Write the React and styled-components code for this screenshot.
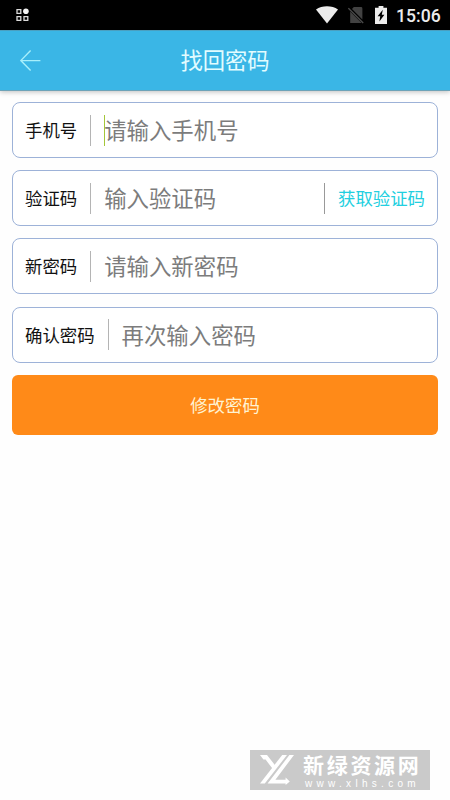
import React from "react"
import styled, { createGlobalStyle } from "styled-components"

const fields = [
  { label: "手机号", placeholder: "请输入手机号", focused: true },
  { label: "验证码", placeholder: "输入验证码", action: "获取验证码" },
  { label: "新密码", placeholder: "请输入新密码" },
  { label: "确认密码", placeholder: "再次输入密码" },
]

const App = () => {
  return (
    <Screen>
      <GlobalStyle />
      <StatusBar>
        <AppsIcon width="14" height="14" viewBox="0 0 14 14">
          <path
            d="M1 1.6h3.8v3.8H1zM1 8.6h3.8v3.8H1zM8 8.6h3.8v3.8H8z"
            fill="none"
            stroke="#dcdcdc"
            strokeWidth="1.3"
          />
          <circle cx="9.9" cy="3.3" r="2.8" fill="#f4f4f4" />
        </AppsIcon>
        <StatusIcons>
          <svg width="22" height="18" viewBox="0 0 22 18">
            <path d="M0 3.6C6-.8 16-.8 22 3.6L11 17.6z" fill="#ececec" />
          </svg>
          <svg width="17" height="18" viewBox="0 0 17 18">
            <path d="M5.8 1H13q1.4 0 1.4 1.4v11L4 3z" fill="#424242" />
            <path d="M2.2 5.4L13.6 17H2.2z" fill="#424242" />
            <path d="M.4 2.2L15.2 17" stroke="#4a4a4a" strokeWidth="1.4" />
          </svg>
          <svg width="12" height="18" viewBox="0 0 12 18">
            <path d="M3.6 0h4.8v1.8H12V18H0V1.8h3.6z" fill="#ececec" />
            <path d="M7.8 3.8L2.6 10.2h2.6L4.4 15.6 9.4 8.8H6.8z" fill="#000" />
          </svg>
        </StatusIcons>
        <Clock>15:06</Clock>
      </StatusBar>
      <Header>
        <BackButton aria-label="返回">
          <svg width="22" height="22" viewBox="0 0 22 22" fill="none">
            <path
              d="M10.6 .6L.8 10.6l9.8 10M.8 10.6h19.6"
              stroke="#a8effb"
              strokeWidth="1.4"
            />
          </svg>
        </BackButton>
        <Title>找回密码</Title>
      </Header>
      <Form>
        {fields.map((field) => (
          <Field key={field.label}>
            <Label>{field.label}</Label>
            <Divider />
            <Placeholder $focused={field.focused}>
              {field.placeholder}
            </Placeholder>
            {field.action ? (
              <>
                <Divider $dark />
                <CodeButton>{field.action}</CodeButton>
              </>
            ) : null}
          </Field>
        ))}
        <SubmitButton>修改密码</SubmitButton>
      </Form>
      <Watermark>
        <svg width="35" height="30" viewBox="0 0 35 30" fill="#fff">
          <path d="M0 0h7l8.2 10.4-2.6 3.4L5.6 4.6H3.4z" />
          <path d="M22.2 0H27L4.8 28.5H0z" />
          <path d="M29.4 0H34L15.4 24.8h10.2v-2.2l4.2 3.9-4.2 3.5v-1.5H7.6z" />
        </svg>
        <WatermarkText>
          <SiteName>新绿资源网</SiteName>
          <SiteUrl>www.xlhs.com</SiteUrl>
        </WatermarkText>
      </Watermark>
    </Screen>
  )
}

export default App


const GlobalStyle = createGlobalStyle`
  * {
    box-sizing: border-box;
  }

  body {
    margin: 0;
    background-color: #fefefe;
    font-family: "Noto Sans CJK SC", sans-serif;
  }

  button {
    border: none;
    padding: 0;
    background: none;
    font-family: inherit;
  }

  svg {
    display: block;
    flex-shrink: 0;
  }
`

const Screen = styled.div`
  width: 450px;
  height: 800px;
  position: relative;
  display: flex;
  flex-direction: column;
  overflow: hidden;
`

const StatusBar = styled.div`
  height: 30px;
  display: flex;
  align-items: center;
  padding: 0 10px 0 16px;
  background-color: #000000;
`

const AppsIcon = styled.svg`
  margin-right: auto;
`

const StatusIcons = styled.div`
  display: flex;
  gap: 10px;
  margin-right: 9px;
`

const Clock = styled.span`
  width: 44px;
  padding-top: 2px;
  color: #ececec;
  font-family: Roboto, sans-serif;
  font-size: 17.6px;
  font-weight: 500;
  line-height: 30px;
  white-space: nowrap;
`

const Header = styled.header`
  height: 61px;
  display: grid;
  grid-template-columns: 60px 1fr 60px;
  align-items: center;
  border-top: 1px solid #4a9fc0;
  border-bottom: 1px solid #6da3b8;
  background-color: #3ab6e6;
  box-shadow: 0 1px 5px rgba(0, 0, 0, 0.25);
`

const BackButton = styled.button`
  height: 22px;
  padding-left: 20px;
`

const Title = styled.h1`
  margin: 0;
  padding-bottom: 3px;
  color: #e2fcff;
  font-size: 22.3px;
  font-weight: 400;
  line-height: 32px;
  text-align: center;
`

const Form = styled.form`
  display: flex;
  flex-direction: column;
  gap: 12.2px;
  padding: 11px 12px;
`

const Field = styled.div`
  height: 56px;
  display: flex;
  align-items: center;
  padding: 0 12px;
  border: 1px solid #9db2d8;
  border-radius: 8px;
  background-color: #ffffff;
`

const Label = styled.span`
  color: #111111;
  font-size: 17.4px;
  line-height: 26px;
`

const Divider = styled.span`
  width: 1px;
  height: 31px;
  margin: 0 13px;
  background-color: ${({ $dark }) => ($dark ? "#999999" : "#b4b4b4")};
`

const Placeholder = styled.span`
  position: relative;
  flex: 1;
  padding-bottom: 1px;
  color: #7c7c7c;
  font-size: 22.4px;
  line-height: 31px;

  &::before {
    content: "";
    display: ${({ $focused }) => ($focused ? "block" : "none")};
    position: absolute;
    left: 0;
    top: 1px;
    width: 1px;
    height: 31px;
    background-color: #a4c639;
  }
`

const CodeButton = styled.button`
  color: #22cfe0;
  font-size: 17.4px;
  line-height: 26px;
`

const SubmitButton = styled.button`
  height: 60px;
  border-radius: 6px;
  background-color: #ff8a18;
  color: #fff3d2;
  font-size: 17.4px;
`

const Watermark = styled.div`
  position: absolute;
  left: 250px;
  top: 750px;
  width: 180px;
  height: 40px;
  display: flex;
  align-items: center;
  gap: 8px;
  padding-left: 10px;
  background-color: #cacaca;
`

const WatermarkText = styled.div`
  display: flex;
  flex-direction: column;
  padding-top: 2px;
  color: #ffffff;
`

const SiteName = styled.span`
  font-family: "Liberation Sans", "Noto Sans CJK SC", sans-serif;
  font-size: 21px;
  font-weight: 700;
  letter-spacing: 2.7px;
  line-height: 24px;
  white-space: nowrap;
`

const SiteUrl = styled.span`
  padding-left: 2px;
  font-family: "Liberation Sans", sans-serif;
  font-size: 10px;
  letter-spacing: 4.3px;
  line-height: 11px;
  white-space: nowrap;
`
